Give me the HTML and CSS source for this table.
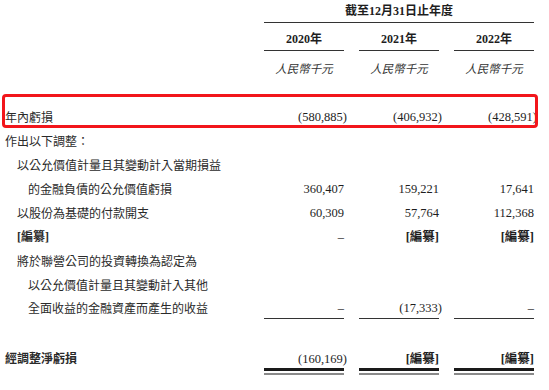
FILE: index.html
```html
<!DOCTYPE html>
<html lang="zh-Hant">
<head>
<meta charset="utf-8">
<link rel="stylesheet" href="styles.css">
</head>
<body>
<div class="page">
  <div class="row title">
    <div></div>
    <div class="span3">截至12月31日止年度</div>
  </div>
  <div class="row years">
    <div></div>
    <div class="yr">2020年</div>
    <div class="yr">2021年</div>
    <div class="yr">2022年</div>
  </div>
  <div class="row units">
    <div></div>
    <div class="unit">人民幣千元</div>
    <div class="unit">人民幣千元</div>
    <div class="unit">人民幣千元</div>
  </div>

  <div class="body">
    <div class="row data">
      <div class="lbl l0">年內虧損</div>
      <div class="v"><span class="neg">(580,885)</span></div>
      <div class="v"><span class="neg">(406,932)</span></div>
      <div class="v"><span class="neg">(428,591)</span></div>
    </div>
    <div class="row data">
      <div class="lbl l0">作出以下調整：</div>
      <div></div><div></div><div></div>
    </div>
    <div class="row data">
      <div class="lbl l1">以公允價值計量且其變動計入當期損益</div>
      <div></div><div></div><div></div>
    </div>
    <div class="row data">
      <div class="lbl l2">的金融負債的公允價值虧損</div>
      <div class="v">360,407</div>
      <div class="v">159,221</div>
      <div class="v">17,641</div>
    </div>
    <div class="row data">
      <div class="lbl l1">以股份為基礎的付款開支</div>
      <div class="v">60,309</div>
      <div class="v">57,764</div>
      <div class="v">112,368</div>
    </div>
    <div class="row data">
      <div class="lbl l1 red">[編纂]</div>
      <div class="v">–</div>
      <div class="v red">[編纂]</div>
      <div class="v red">[編纂]</div>
    </div>
    <div class="row data">
      <div class="lbl l1">將於聯營公司的投資轉換為認定為</div>
      <div></div><div></div><div></div>
    </div>
    <div class="row data">
      <div class="lbl l2">以公允價值計量且其變動計入其他</div>
      <div></div><div></div><div></div>
    </div>
    <div class="row data sub">
      <div class="lbl l2">全面收益的金融資產而產生的收益</div>
      <div class="v">–</div>
      <div class="v"><span class="neg">(17,333)</span></div>
      <div class="v">–</div>
    </div>
    <div class="row data net">
      <div class="lbl l0 red">經調整淨虧損</div>
      <div class="v"><span class="neg">(160,169)</span></div>
      <div class="v red">[編纂]</div>
      <div class="v red">[編纂]</div>
    </div>

    <div class="highlight"></div>
  </div>
</div>
</body>
</html>
```

FILE: styles.css
```css
html, body {
  margin: 0;
  padding: 0;
  background: #ffffff;
}

body {
  font-family: "Liberation Serif", "Noto Sans CJK TC", serif;
  color: #1e1e1e;
}

.page {
  width: 549px;
  height: 390px;
  padding-right: 15px;
  box-sizing: border-box;
}

.row {
  display: grid;
  grid-template-columns: 1fr 80px 80px 80px;
  column-gap: 15px;
}

.title {
  height: 23px;
}

.span3 {
  grid-column: 2 / 5;
  text-align: center;
  font-family: "Liberation Serif", "Noto Sans CJK TC", serif;
  font-weight: 700;
  font-size: 12px;
  line-height: 20px;
  padding-top: 1px;
  border-bottom: 1px solid #333;
}

.years {
  height: 28px;
}

.yr {
  text-align: center;
  font-weight: 700;
  font-size: 12px;
  line-height: 20px;
  padding-top: 6px;
  border-bottom: 1px solid #333;
}

.units {
  height: 30px;
}

.unit {
  text-align: center;
  font-style: italic;
  font-family: "Noto Sans CJK TC", sans-serif;
  font-size: 11.5px;
  line-height: 20px;
  padding-top: 7px;
  color: #333;
}

.body {
  position: relative;
  padding-top: 24px;
}

.data {
  height: 24px;
  align-items: center;
}

.lbl {
  font-family: "Noto Sans CJK TC", sans-serif;
  font-size: 12px;
  line-height: 20px;
  color: #2a2a2a;
  white-space: nowrap;
}

.l0 { padding-left: 5px; }
.l1 { padding-left: 17px; }
.l2 { padding-left: 28px; }

.v {
  text-align: right;
  font-size: 12.5px;
  line-height: 20px;
  color: #1e1e1e;
  white-space: nowrap;
}

.neg {
  margin-right: -3px;
}

.red {
  font-family: "Liberation Serif", "Noto Sans CJK TC", serif;
  font-weight: 700;
}

.lbl.red {
  font-family: "Liberation Serif", "Noto Sans CJK TC", sans-serif;
}

.sub {
  height: 24px;
  align-items: start;
}

.sub .lbl {
  padding-top: 1px;
}

.sub .v {
  height: 21px;
  line-height: 22px;
  border-bottom: 1px solid #333;
}

.net {
  margin-top: 28px;
  height: 22px;
  align-items: start;
}

.net .v {
  height: 19px;
  border-bottom: 3px solid #1a1a1a;
  box-shadow: 0 2px 0 #ffffff, 0 4px 0 #8a8a8a;
}

.highlight {
  position: absolute;
  left: 2px;
  top: 13px;
  width: 536px;
  height: 34px;
  box-sizing: border-box;
  border: 3px solid #f2161b;
  border-radius: 4px;
}
```
